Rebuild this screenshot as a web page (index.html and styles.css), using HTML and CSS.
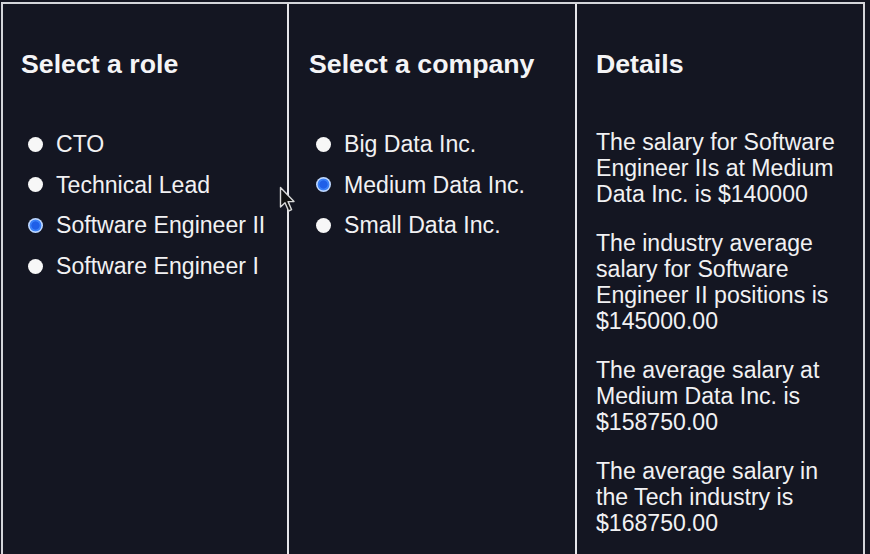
FILE: index.html
```html
<!DOCTYPE html>
<html lang="en">
<head>
<meta charset="utf-8">
<title>Salary explorer</title>
<link rel="stylesheet" href="styles.css">
</head>
<body>
<div class="board">
  <section class="col">
    <h2 class="title">Select a role</h2>
    <div class="options">
      <label class="opt"><input type="radio" name="role" class="radio"><span>CTO</span></label>
      <label class="opt"><input type="radio" name="role" class="radio"><span>Technical Lead</span></label>
      <label class="opt"><input type="radio" name="role" class="radio" checked><span>Software Engineer II</span></label>
      <label class="opt"><input type="radio" name="role" class="radio"><span>Software Engineer I</span></label>
    </div>
  </section>
  <section class="col col-mid">
    <h2 class="title">Select a company</h2>
    <div class="options">
      <label class="opt"><input type="radio" name="company" class="radio"><span>Big Data Inc.</span></label>
      <label class="opt"><input type="radio" name="company" class="radio" checked><span>Medium Data Inc.</span></label>
      <label class="opt"><input type="radio" name="company" class="radio"><span>Small Data Inc.</span></label>
    </div>
  </section>
  <section class="col col-last">
    <h2 class="title">Details</h2>
    <div class="details">
      <p class="para">The salary for Software Engineer IIs at Medium Data Inc. is $140000</p>
      <p class="para">The industry average salary for Software Engineer II positions is $145000.00</p>
      <p class="para">The average salary at Medium Data Inc. is $158750.00</p>
      <p class="para">The average salary in the Tech industry is $168750.00</p>
    </div>
  </section>
</div>
<svg class="cursor" width="18" height="28" viewBox="0 0 18 28" aria-hidden="true">
  <path d="M1.5 1.5 L1.5 21 L6 16.8 L9.6 25 L12.6 23.7 L9.1 15.6 L15 15.6 Z" fill="#111" stroke="#d9d9d9" stroke-width="1.4" stroke-linejoin="round"/>
</svg>
</body>
</html>
```

FILE: styles.css
```css
html, body {
  margin: 0;
  padding: 0;
  background: #141622;
}
body {
  width: 870px;
  height: 554px;
  overflow: hidden;
  position: relative;
  font-family: "Liberation Sans", Arial, Helvetica, sans-serif;
  color: #f1f1f3;
}
.board {
  margin: 2px 0 0 1px;
  width: 860px;
  height: 560px;
  border: 2px solid #d4d5da;
  border-bottom: none;
  display: grid;
  grid-template-columns: 286px 288px 1fr;
}
.col {
  border-right: 2px solid #e6e6ea;
  padding: 45px 18px 0 18px;
}
.col-mid {
  padding-left: 20px;
}
.col-last {
  border-right: none;
  padding-left: 19px;
}
.title {
  margin: 0;
  font-size: 26.7px;
  font-weight: 700;
  line-height: 31px;
  color: #f4f4f6;
}
.options {
  margin-top: 51px;
  display: flex;
  flex-direction: column;
  gap: 14.7px;
}
.opt {
  display: flex;
  align-items: center;
  gap: 13px;
  font-size: 23.1px;
  line-height: 26px;
  padding-left: 7px;
  white-space: nowrap;
}
.radio {
  appearance: none;
  -webkit-appearance: none;
  margin: 0;
  width: 15px;
  height: 15px;
  border-radius: 50%;
  background: #f7f7f7;
  flex: none;
}
.radio:checked {
  background: radial-gradient(circle, #1f5fe8 0 3.8px, #3a80f7 4.4px 5.6px, #bcd6ff 6.2px 7.5px);
}
.details {
  padding-top: 26px;
}
.para {
  margin: 23px 0 0 0;
  font-size: 23.1px;
  line-height: 26px;
}
.cursor {
  position: absolute;
  left: 279px;
  top: 186px;
}
```
